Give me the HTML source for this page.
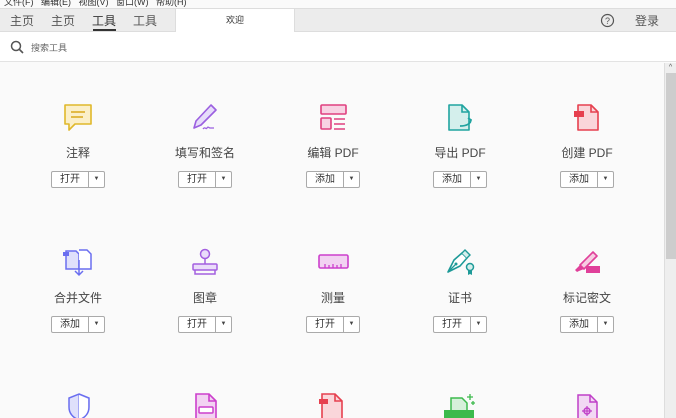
<!DOCTYPE html><html><head><meta charset="utf-8"><style>
*{margin:0;padding:0;box-sizing:border-box}
html,body{width:676px;height:418px;overflow:hidden}
body{background:#fafafa;font-family:"Liberation Sans","Noto Sans CJK SC",sans-serif;position:relative;color:#444}
.menu{position:absolute;top:-5px;left:4px;font-size:9px;color:#333;height:8px;white-space:nowrap}
.tabs{position:absolute;top:8px;left:0;width:676px;height:24px;background:#ececec;border-top:1px solid #ddd;border-bottom:1px solid #ddd}
.tab{position:absolute;top:3px;font-size:12px;color:#555}
.welcome{position:absolute;left:175px;top:0;width:120px;height:23px;background:#fff;border-left:1px solid #ddd;border-right:1px solid #ddd;font-size:9px;text-align:center;line-height:23px;color:#333}
.search{position:absolute;top:32px;left:0;width:676px;height:30px;background:#fff;border-bottom:1px solid #e3e3e3}
.sb{position:absolute;left:664px;top:63px;width:12px;height:355px;background:#eee;border-left:1px solid #ddd}
.thumb{position:absolute;left:1px;top:10px;width:10px;height:186px;background:#cdcdcd}
.tool{position:absolute;width:120px;text-align:center}
.tool svg{display:block;margin:0 auto}
.lbl{font-size:12px;color:#444;margin-top:10px;height:18px;line-height:18px;margin-bottom:9px}
.btn{width:54px;height:17px;margin:0 auto;border:1px solid #aaa;border-radius:2px;background:#fff;display:flex;font-size:10px;line-height:15px;color:#333}
.btn span{width:37px;border-right:1px solid #aaa;text-align:center}
.btn i{flex:1;font-style:normal;font-size:6px;text-align:center;color:#444}
</style></head><body>
<div class="menu">文件(F)&nbsp;&nbsp;&nbsp;编辑(E)&nbsp;&nbsp;&nbsp;视图(V)&nbsp;&nbsp;&nbsp;窗口(W)&nbsp;&nbsp;&nbsp;帮助(H)</div>
<div class="tabs">
<div class="tab" style="left:10px">主页</div><div class="tab" style="left:51px">主页</div>
<div class="tab" style="left:92px;color:#333">工具</div><div style="position:absolute;left:93px;top:20px;width:23px;height:2px;background:#333"></div>
<div class="tab" style="left:133px">工具</div>
<div class="welcome">欢迎</div>
<svg style="position:absolute;left:600px;top:4px" width="15" height="15"><circle cx="7.5" cy="7.5" r="6" fill="none" stroke="#555" stroke-width="1.2"/><text x="7.5" y="11" font-size="9" text-anchor="middle" fill="#555" font-family="Liberation Sans">?</text></svg>
<div class="tab" style="left:635px">登录</div>
</div>
<div class="search"><svg style="position:absolute;left:10px;top:8px" width="14" height="14"><circle cx="6" cy="6" r="4.5" fill="none" stroke="#555" stroke-width="1.5"/><path d="M9.5 9.5L13 13" stroke="#555" stroke-width="1.6"/></svg><span style="position:absolute;left:31px;top:9px;font-size:9px;color:#666">搜索工具</span></div>
<div class="sb"><div style="font-size:7px;text-align:center;color:#555;margin-top:1px">^</div><div class="thumb"></div></div>

<!-- row 1 -->
<div class="tool" style="left:18px;top:102px"><svg width="32" height="32" viewBox="0 0 32 32"><path d="M3 3h26v19H13l-6 6v-6H3z" fill="#fbefc8" stroke="#e0b82a" stroke-width="1.6" stroke-linejoin="round"/><path d="M9 10h14M9 15h12" stroke="#d9a91a" stroke-width="1.5"/></svg><div class="lbl">注释</div><div class="btn"><span>打开</span><i>▼</i></div></div>
<div class="tool" style="left:145px;top:102px"><svg width="32" height="32" viewBox="0 0 32 32"><path d="M22 3l5 5-15 15-7 3 2-7z" fill="#e6dcfa" stroke="#9b5fe0" stroke-width="1.6" stroke-linejoin="round"/><path d="M14 27c2-3 3 1 4-1s2 0 3 0 2 0 4 0" fill="none" stroke="#9b5fe0" stroke-width="1.3"/></svg><div class="lbl">填写和签名</div><div class="btn"><span>打开</span><i>▼</i></div></div>
<div class="tool" style="left:273px;top:102px"><svg width="32" height="32" viewBox="0 0 32 32"><rect x="4" y="3" width="25" height="9" rx="1" fill="#f8d2e3" stroke="#e0407f" stroke-width="1.6"/><rect x="4" y="16" width="10" height="11" rx="1" fill="#f8d2e3" stroke="#e0407f" stroke-width="1.6"/><path d="M17 17h11M17 22h11M17 27h11" stroke="#e0407f" stroke-width="1.6"/></svg><div class="lbl">编辑 PDF</div><div class="btn"><span>添加</span><i>▼</i></div></div>
<div class="tool" style="left:400px;top:102px"><svg width="32" height="32" viewBox="0 0 32 32"><path d="M5 3h13l7 7v18H5z" fill="#d4efec" stroke="#20a4a0" stroke-width="1.6" stroke-linejoin="round"/><path d="M18 3v7h7" fill="none" stroke="#20a4a0" stroke-width="1.6"/><path d="M16 24c5 0 10-1 11-6M24 16l3 2-1 3" fill="none" stroke="#20a4a0" stroke-width="1.8"/></svg><div class="lbl">导出 PDF</div><div class="btn"><span>添加</span><i>▼</i></div></div>
<div class="tool" style="left:527px;top:102px"><svg width="32" height="32" viewBox="0 0 32 32"><path d="M7 3h13l7 7v18H7z" fill="#fad6da" stroke="#e6404f" stroke-width="1.6" stroke-linejoin="round"/><path d="M20 3v7h7" fill="none" stroke="#e6404f" stroke-width="1.6"/><rect x="3" y="9" width="10" height="6" fill="#e6404f"/></svg><div class="lbl">创建 PDF</div><div class="btn"><span>添加</span><i>▼</i></div></div>

<!-- row 2 -->
<div class="tool" style="left:18px;top:247px"><svg width="32" height="32" viewBox="0 0 32 32"><path d="M4 4h10l3 3v15H4z" fill="#dfe0fb" stroke="#6a6ef0" stroke-width="1.5"/><rect x="1" y="5" width="6" height="4" fill="#6a6ef0"/><path d="M17 3h8l4 4v15H17" fill="#fff" stroke="#6a6ef0" stroke-width="1.5"/><path d="M17 13v15M13 24l4 4 4-4" fill="none" stroke="#6a6ef0" stroke-width="1.5"/></svg><div class="lbl">合并文件</div><div class="btn"><span>添加</span><i>▼</i></div></div>
<div class="tool" style="left:145px;top:247px"><svg width="32" height="32" viewBox="0 0 32 32"><circle cx="16" cy="7" r="4.5" fill="#eadcfa" stroke="#a35fe0" stroke-width="1.5"/><path d="M16 11v6" stroke="#a35fe0" stroke-width="1.5"/><rect x="4" y="17" width="24" height="6" rx="1" fill="#eadcfa" stroke="#a35fe0" stroke-width="1.5"/><path d="M6 23v4h20v-4" fill="none" stroke="#a35fe0" stroke-width="1.5"/></svg><div class="lbl">图章</div><div class="btn"><span>打开</span><i>▼</i></div></div>
<div class="tool" style="left:273px;top:247px"><svg width="32" height="32" viewBox="0 0 32 32"><rect x="2" y="8" width="29" height="13" rx="1.5" fill="#f2d2f2" stroke="#cc3fcc" stroke-width="1.6"/><path d="M8 21v-4M12 21v-3M16 21v-4M20 21v-3M24 21v-4" stroke="#cc3fcc" stroke-width="1.3"/></svg><div class="lbl">测量</div><div class="btn"><span>打开</span><i>▼</i></div></div>
<div class="tool" style="left:400px;top:247px"><svg width="32" height="32" viewBox="0 0 32 32"><path d="M4 25l6-12 8-7 5 5-7 8z" fill="#fff" stroke="#1e9a98" stroke-width="1.6" stroke-linejoin="round"/><path d="M18 6l3-3 5 5-3 3" fill="#d4efec" stroke="#1e9a98" stroke-width="1.4"/><path d="M4 25l7-7" stroke="#1e9a98" stroke-width="1.3"/><circle cx="12" cy="17" r="1.5" fill="#1e9a98"/><circle cx="26" cy="20" r="3.5" fill="#d4efec" stroke="#1e9a98" stroke-width="1.5"/><path d="M24 23v5l2-1 2 1v-5" fill="#1e9a98"/></svg><div class="lbl">证书</div><div class="btn"><span>打开</span><i>▼</i></div></div>
<div class="tool" style="left:527px;top:247px"><svg width="32" height="32" viewBox="0 0 32 32"><path d="M9 18l13-13 4 4-13 13z" fill="#f7cde2" stroke="#e0409a" stroke-width="1.6" stroke-linejoin="round"/><path d="M9 18l-5 5 2 2 2-1 5-2z" fill="#e0409a"/><rect x="15" y="19" width="14" height="7" fill="#e0409a"/></svg><div class="lbl">标记密文</div><div class="btn"><span>添加</span><i>▼</i></div></div>

<!-- row 3 -->
<svg style="position:absolute;left:65px;top:392px" width="28" height="30" viewBox="0 0 28 30"><path d="M14 2l10 4v9c0 7-5 11-10 13C9 26 4 22 4 15V6z" fill="#dfe0fb" stroke="#6a6ef0" stroke-width="1.5"/><path d="M14 2v26" stroke="#6a6ef0" stroke-width="1"/><path d="M14 3l9 4v8c0 7-4 10-9 12z" fill="#fff"/></svg>
<svg style="position:absolute;left:192px;top:392px" width="28" height="30" viewBox="0 0 28 30"><path d="M4 2h13l7 7v20H4z" fill="#f2d2f2" stroke="#cc3fcc" stroke-width="1.6"/><path d="M17 2v7h7" fill="none" stroke="#cc3fcc" stroke-width="1.6"/><rect x="7" y="15" width="14" height="6" rx="1" fill="#fff" stroke="#cc3fcc" stroke-width="1.5"/></svg>
<svg style="position:absolute;left:316px;top:392px" width="30" height="30" viewBox="0 0 30 30"><path d="M6 2h13l7 7v20H6z" fill="#fad6da" stroke="#e6404f" stroke-width="1.6"/><path d="M19 2v7h7" fill="none" stroke="#e6404f" stroke-width="1.6"/><rect x="3" y="7" width="9" height="5" fill="#e6404f"/></svg>
<svg style="position:absolute;left:442px;top:392px" width="34" height="30" viewBox="0 0 34 30"><path d="M9 6h11l5 5v9H9z" fill="#d6f0da" stroke="#3cba4c" stroke-width="1.5"/><rect x="2" y="18" width="30" height="10" fill="#3cba4c"/><path d="M28 2v6M25 5h6M31 9v4M29 11h4" stroke="#3cba4c" stroke-width="1.3"/></svg>
<svg style="position:absolute;left:575px;top:393px" width="26" height="30" viewBox="0 0 26 30"><path d="M3 2h12l7 7v20H3z" fill="#f2d8f4" stroke="#c040c8" stroke-width="1.5"/><path d="M15 2v7h7" fill="none" stroke="#c040c8" stroke-width="1.5"/><circle cx="12" cy="18" r="3" fill="none" stroke="#c040c8" stroke-width="1.4"/><path d="M12 13v10M7 18h10" stroke="#c040c8" stroke-width="1.2"/></svg>
</body></html>
